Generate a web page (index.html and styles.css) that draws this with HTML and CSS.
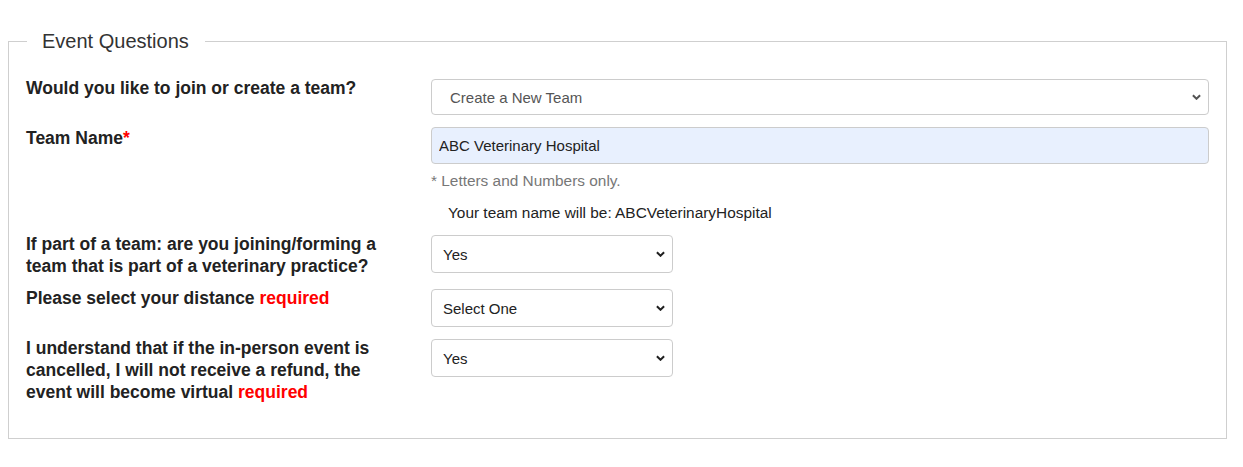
FILE: index.html
```html
<!DOCTYPE html>
<html lang="en">
<head>
    <meta charset="UTF-8">
    <meta name="viewport" content="width=device-width, initial-scale=1.0">
    <title>Event Questions</title>
    <link rel="stylesheet" href="styles.css">
</head>
<body>
    <form id="eventForm">
        <fieldset class="questions">
            <legend>Event Questions</legend>

            <div class="row">
                <label for="team_choice">Would you like to join or create a team?</label>
                <div class="field">
                    <select id="team_choice" class="wide first">
                        <option>Create a New Team</option>
                        <option>Join an Existing Team</option>
                    </select>
                </div>
            </div>

            <div class="row">
                <label for="team_name" class="tight">Team Name<span class="star">*</span></label>
                <div class="field">
                    <input type="text" id="team_name" value="ABC Veterinary Hospital">
                    <p class="hint">* Letters and Numbers only.</p>
                    <p class="preview">Your team name will be: ABCVeterinaryHospital</p>
                </div>
            </div>

            <div class="row">
                <label for="practice">If part of a team: are you joining/forming a team that is part of a veterinary practice?</label>
                <div class="field">
                    <select id="practice" class="short">
                        <option>Yes</option>
                        <option>No</option>
                    </select>
                </div>
            </div>

            <div class="row">
                <label for="distance">Please select your distance <span class="req">required</span></label>
                <div class="field">
                    <select id="distance" class="short">
                        <option>Select One</option>
                        <option>5K</option>
                        <option>10K</option>
                    </select>
                </div>
            </div>

            <div class="row">
                <label for="refund">I understand that if the in-person event is cancelled, I will not receive a refund, the event will become virtual <span class="req">required</span></label>
                <div class="field">
                    <select id="refund" class="short">
                        <option>Yes</option>
                        <option>No</option>
                    </select>
                </div>
            </div>
        </fieldset>
    </form>
</body>
</html>
```

FILE: styles.css
```css
body {
    font-family: "Liberation Sans", Arial, sans-serif;
    margin: 8px 16px 8px 8px;
    background-color: #fff;
    color: #222;
}
.questions {
    margin: 21px 0 0 0;
    padding: 26px 17px 23px 17px;
    border: 1px solid #cfcfcf;
    min-width: 0;
}
.questions legend {
    font-size: 20px;
    line-height: 24px;
    color: #333;
    padding: 0 16px 0 15px;
    margin-left: 1px;
}
.row {
    display: flex;
    align-items: flex-start;
    margin-bottom: 12px;
}
.row label {
    width: 405px;
    flex-shrink: 0;
    font-size: 17.5px;
    font-weight: bold;
    line-height: 22px;
    color: #222;
    padding-right: 30px;
    box-sizing: border-box;
    margin-top: -2px;
}
.row label.tight {
    margin-top: 0;
}
.star, .req {
    color: #f00;
}
.field {
    flex: 1;
}
select, input {
    font-family: "Liberation Sans", Arial, sans-serif;
    font-size: 15px;
    color: #222;
    border: 1px solid #ccc;
    border-radius: 4px;
    background-color: #fff;
    box-sizing: border-box;
    margin: 0;
}
select {
    appearance: none;
    -webkit-appearance: none;
    background-image: url("data:image/svg+xml,%3Csvg xmlns='http://www.w3.org/2000/svg' width='10' height='6' viewBox='0 0 10 6'%3E%3Cpath d='M1 1l4 4 4-4' fill='none' stroke='%23222' stroke-width='2.2'/%3E%3C/svg%3E");
    background-repeat: no-repeat;
    background-position: right 7px center;
    background-size: 9px 6px;
}
select.wide {
    width: 100%;
    height: 36px;
    padding: 0 30px 0 18px;
    color: #555;
    background-image: url("data:image/svg+xml,%3Csvg xmlns='http://www.w3.org/2000/svg' width='10' height='6' viewBox='0 0 10 6'%3E%3Cpath d='M1 1l4 4 4-4' fill='none' stroke='%23555' stroke-width='2.2'/%3E%3C/svg%3E");
}
select.short {
    width: 242px;
    height: 38px;
    padding: 0 30px 0 11px;
}
input[type="text"] {
    width: 100%;
    height: 37px;
    padding: 0 7px;
    background-color: #e8f0fe;
}
.hint {
    margin: 8px 0 0 0;
    font-size: 15.4px;
    line-height: 18px;
    color: #777;
}
.preview {
    margin: 14px 0 1px 17px;
    font-size: 15.4px;
    line-height: 18px;
    color: #222;
}
```
